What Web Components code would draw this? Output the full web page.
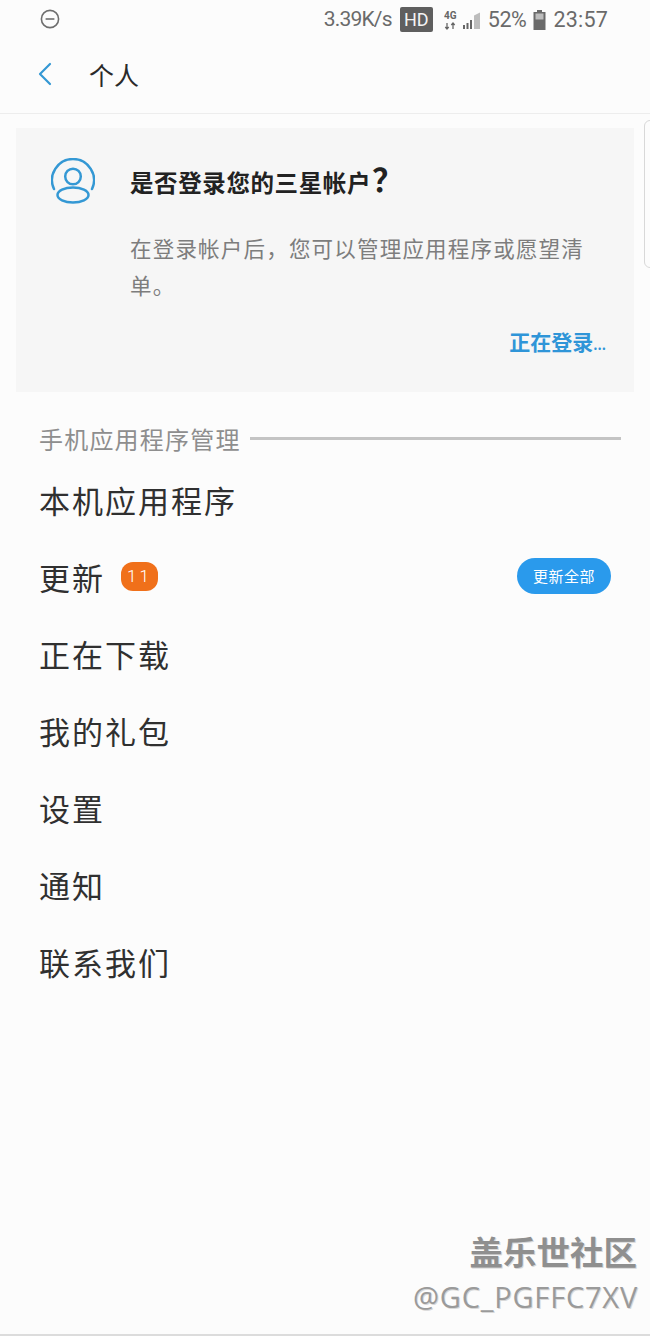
<!DOCTYPE html>
<html lang="zh-CN"><head><meta charset="utf-8"><title>个人</title>
<style>
html,body{margin:0;padding:0;background:#fcfcfc}
body{font-family:"Noto Sans CJK SC","Noto Sans",sans-serif}
</style></head><body>
<app-screen>
  <status-bar></status-bar>
  <app-header>个人</app-header>
  <login-card></login-card>
  <section-head>手机应用程序管理</section-head>
  <menu-row>本机应用程序</menu-row>
  <menu-row badge="11" action="更新全部">更新</menu-row>
  <menu-row>正在下载</menu-row>
  <menu-row>我的礼包</menu-row>
  <menu-row>设置</menu-row>
  <menu-row>通知</menu-row>
  <menu-row>联系我们</menu-row>
</app-screen>
<script>
function def(name,html,init){
  customElements.define(name,class extends HTMLElement{
    constructor(){super();this.attachShadow({mode:'open'}).innerHTML=html;}
    connectedCallback(){if(init)init(this,this.shadowRoot);}
  });
}
def('app-screen',`<style>
:host{display:flex;flex-direction:column;position:relative;width:650px;height:1336px;box-sizing:border-box;overflow:hidden;background:#fcfcfc;border-bottom:2px solid #dcdcdc}
.scroll{position:absolute;right:-6px;top:120px;width:10px;height:146px;border:1px solid #d8d8d8;border-radius:6px}
.mark{position:absolute;right:13px;bottom:20px;display:flex;flex-direction:column;align-items:flex-end;gap:10px;color:#8f8f8f;text-shadow:1px 1px 0 #d8d8d8}
.a{font:700 33.500px/38px "Noto Sans CJK SC",sans-serif;height:38px}
.b{font:400 29px/34px "Open Sans","Noto Sans",sans-serif;height:34px;color:#9a9a9a;letter-spacing:.8px;margin-right:-1px}
</style><slot></slot><div class="scroll"></div><div class="mark"><div class="a">盖乐世社区</div><div class="b">@GC_PGFFC7XV</div></div>`);
def('status-bar',`<style>
:host{display:flex;align-items:center;height:38px;box-sizing:border-box;padding:1px 42px 0 40px;color:#6a6a6a;font:400 21.500px/37px "Roboto",sans-serif}
.sp{flex:1}
.hd{display:flex;align-items:center;justify-content:center;width:33px;height:25px;margin:-1px 11px 0 8px;background:#5f5f5f;color:#f4f4f4;border-radius:2px;font:400 18px/25px "Roboto",sans-serif}
.net{margin-right:1px}
.pct{margin:0 7px 0 5px;letter-spacing:-.4px}
.sp1{letter-spacing:-.8px;font-size:21px}
svg{display:block}
</style>
<svg width="20" height="20" viewBox="0 0 20 20" fill="none" stroke="#6e6e6e" stroke-width="1.600" style="margin-top:-1px"><circle cx="10" cy="10" r="8.600"/><path d="M5.600 10h8.800"/></svg>
<span class="sp"></span><span class="sp1">3.39K/s</span><span class="hd">HD</span>
<svg class="net" width="38" height="20" viewBox="0 0 38 20"><text x="0" y="9" font-family="Roboto" font-size="10" font-weight="700" fill="#666">4G</text>
<path d="M3 13v6M1.300 17l1.700 2 1.700-2M9 19v-6M7.300 15l1.700-2 1.700 2" fill="none" stroke="#666" stroke-width="1.300"/>
<path d="M19 15h2v4h-2zM22.500 13h2v6h-2zM26 10h2v9h-2z" fill="#666"/><path d="M30 5.500l6-3V19h-6z" fill="#bdbdbd"/></svg>
<span class="pct">52%</span>
<svg width="13" height="20" viewBox="0 0 13 20"><path d="M4 0h5v2h3.500v18H.500V2H4z" fill="#6a6a6a"/><path d="M2.500 3.500h8v6h-8z" fill="#bdbdbd"/></svg>
<span style="margin-left:7px;letter-spacing:.2px">23:57</span>`);
def('app-header',`<style>
:host{display:flex;align-items:center;height:76px;box-sizing:border-box;border-bottom:1px solid #ededed;padding:0 0 3px 38px;color:#2a2a2a;font:400 25px/34px "Noto Sans CJK SC",sans-serif}
svg{display:block;margin-right:37px;flex:none}
</style><svg width="14" height="24" viewBox="0 0 14 24" fill="none" stroke="#3498d4" stroke-width="2.200" stroke-linecap="round" stroke-linejoin="round"><path d="M12 2 2 12l10 10"/></svg><slot></slot>`);
def('login-card',`<style>
:host{display:block;margin:14px 16px 0;height:264px;box-sizing:border-box;background:#f6f6f6;padding:30px 28px 0 35px;position:relative}
.top{display:flex;align-items:center;height:46px}
svg{display:block;flex:none;margin-right:35px}
h2{margin:-3px 0 0;font:700 23.500px/32px "Noto Sans CJK SC",sans-serif;letter-spacing:.6px;color:#222}
h2 span{font-size:32px;line-height:32px;margin-left:1px}
p{margin:25px 0 0 79px;font:400 21.500px/37px "Noto Sans CJK SC",sans-serif;letter-spacing:1.200px;color:#7d7d7d}
.go{position:absolute;right:28px;top:197px;font:700 21px/32px "Noto Sans CJK SC",sans-serif;color:#2f95d8}
.go span{font-size:13px}
</style><div class="top"><svg width="44" height="46" viewBox="0 0 44 46" fill="none" stroke="#3498d4" stroke-width="2.500" stroke-linecap="round"><path d="M3 31A21 21 0 1 1 41 31"/><circle cx="22" cy="18.500" r="7.800"/><ellipse cx="22" cy="37" rx="15.500" ry="7.500"/></svg><h2>是否登录您的三星帐户<span>？</span></h2></div>
<p>在登录帐户后，您可以管理应用程序或愿望清单。</p><div class="go">正在登录<span>...</span></div>`);
def('section-head',`<style>
:host{display:flex;align-items:center;gap:9px;margin:30px 29px 5px 39px;height:34px;color:#8e8e8e;font:400 24px/32px "Noto Sans CJK SC",sans-serif;letter-spacing:1.200px}
i{flex:1;height:3px;background:#c4c4c4;margin-top:-2px}
</style><slot></slot><i></i>`);
def('menu-row',`<style>
:host{display:flex;align-items:center;height:77px;box-sizing:border-box;padding:0 39px;color:#303030;font:400 31px/44px "Noto Sans CJK SC",sans-serif;letter-spacing:2px}
.b{display:none;align-items:center;justify-content:center;width:37px;height:29px;margin-left:16px;border-radius:12px;background:#f0701a;color:#fff;font:300 17px/29px "Roboto",sans-serif;letter-spacing:3px;margin-top:-1px}
.sp{flex:1}
.act{display:none;align-items:center;justify-content:center;width:94px;height:36px;border-radius:18px;background:#2a9aec;color:#fff;font:400 15px/36px "Noto Sans CJK SC",sans-serif;letter-spacing:.5px;margin-top:-1px}
</style><slot></slot><span class="b"></span><span class="sp"></span><span class="act"></span>`,(h,s)=>{
  const b=h.getAttribute('badge'),a=h.getAttribute('action');
  if(b){const e=s.querySelector('.b');e.textContent=b;e.style.display='flex';}
  if(a){const e=s.querySelector('.act');e.textContent=a;e.style.display='flex';}
});
</script>
</body></html>
